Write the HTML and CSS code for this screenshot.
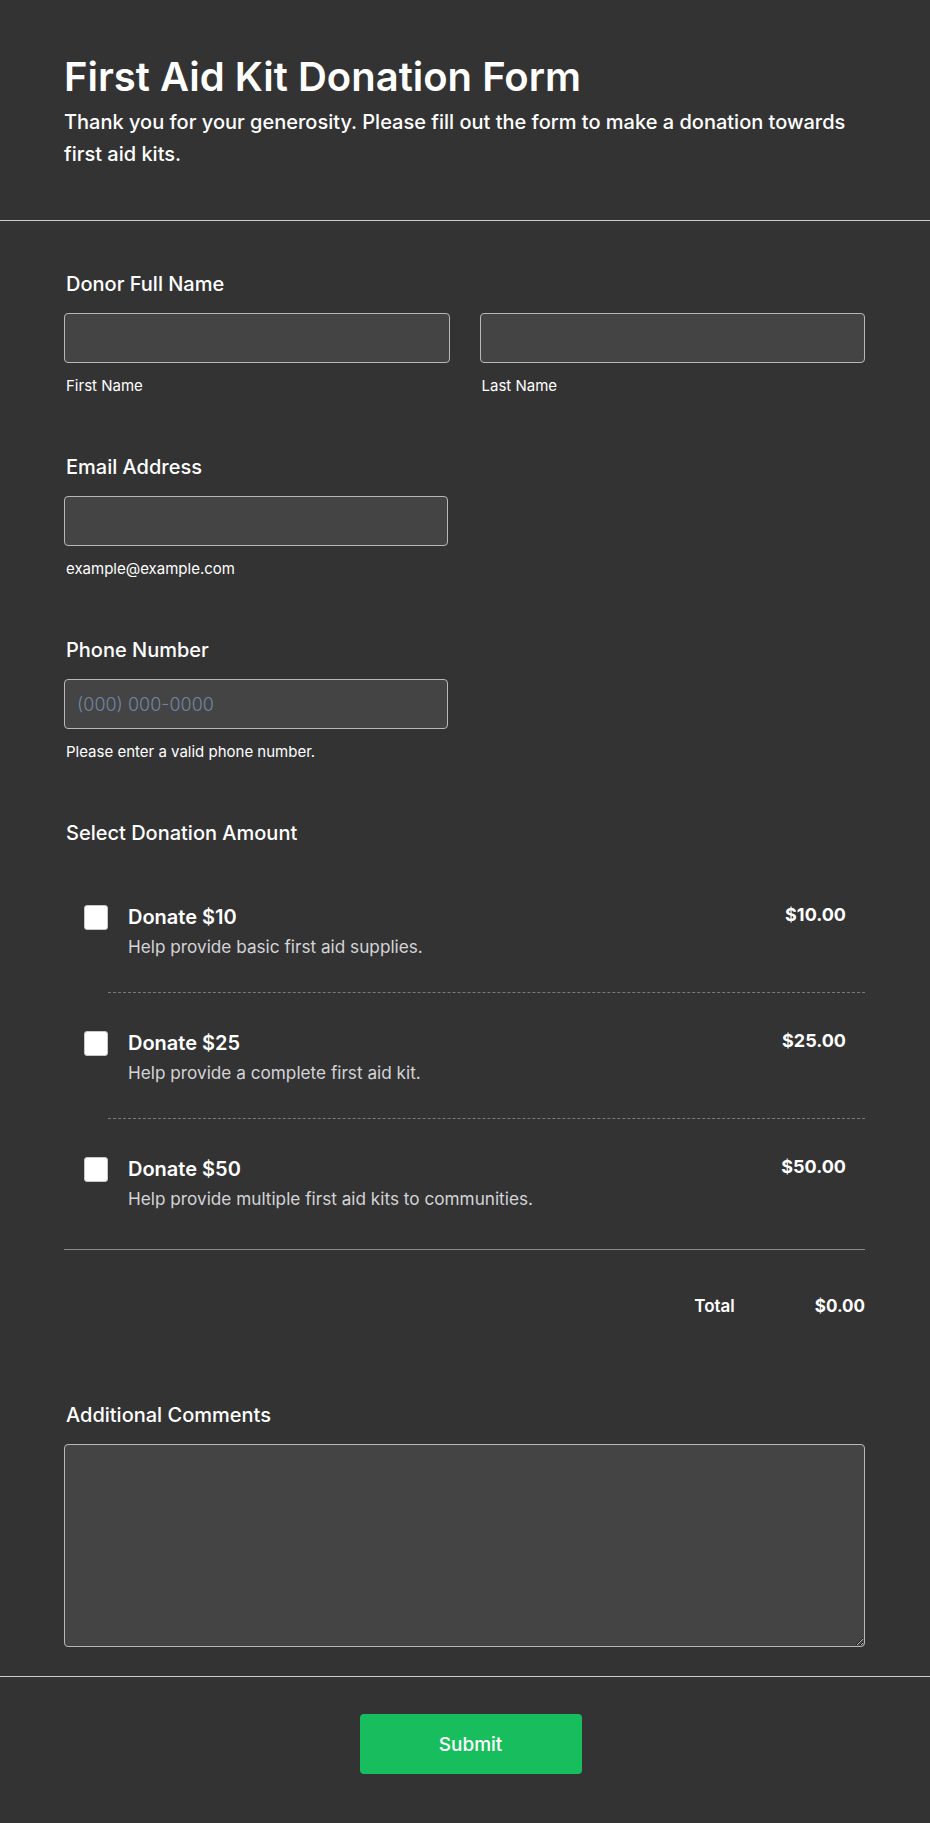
FILE: index.html
```html
<!DOCTYPE html>
<html lang="en">
<head>
    <meta charset="UTF-8">
    <meta name="viewport" content="width=device-width, initial-scale=1.0">
    <title>First Aid Kit Donation Form</title>
    <link rel="stylesheet" href="styles.css">
</head>
<body>
    <header class="form-header">
        <h1>First Aid Kit Donation Form</h1>
        <p>Thank you for your generosity. Please fill out the form to make a donation towards first aid kits.</p>
    </header>

    <form id="donation-form" onsubmit="return false">
        <div class="form-body">

            <!-- name -->
            <div class="field">
                <label class="field-label">Donor Full Name</label>
                <div class="name-row">
                    <div>
                        <input type="text" id="first-name">
                        <span class="hint">First Name</span>
                    </div>
                    <div>
                        <input type="text" id="last-name">
                        <span class="hint">Last Name</span>
                    </div>
                </div>
            </div>

            <div class="field">
                <label class="field-label" for="email">Email Address</label>
                <input type="email" id="email" class="half">
                <span class="hint">example@example.com</span>
            </div>

            <div class="field">
                <label class="field-label" for="phone">Phone Number</label>
                <input type="tel" id="phone" class="half" placeholder="(000) 000-0000">
                <span class="hint">Please enter a valid phone number.</span>
            </div>

            <!-- donation amounts -->
            <div class="field amounts">
                <label class="field-label">Select Donation Amount</label>
                <ul class="amount-list">
                    <li class="amount-item">
                        <input type="checkbox" value="10">
                        <div class="amount-text">
                            <span class="amount-title">Donate $10</span>
                            <span class="amount-desc">Help provide basic first aid supplies.</span>
                        </div>
                        <span class="amount-price">$10.00</span>
                    </li>
                    <li class="amount-sep"></li>
                    <li class="amount-item">
                        <input type="checkbox" value="25">
                        <div class="amount-text">
                            <span class="amount-title">Donate $25</span>
                            <span class="amount-desc">Help provide a complete first aid kit.</span>
                        </div>
                        <span class="amount-price">$25.00</span>
                    </li>
                    <li class="amount-sep"></li>
                    <li class="amount-item last">
                        <input type="checkbox" value="50">
                        <div class="amount-text">
                            <span class="amount-title">Donate $50</span>
                            <span class="amount-desc">Help provide multiple first aid kits to communities.</span>
                        </div>
                        <span class="amount-price">$50.00</span>
                    </li>
                </ul>
                <div class="total-row">
                    <span class="total-label">Total</span>
                    <span class="total-value" id="total">$0.00</span>
                </div>
            </div>

            <div class="field comments">
                <label class="field-label" for="comments">Additional Comments</label>
                <textarea id="comments"></textarea>
            </div>
        </div>

        <div class="form-footer">
            <button type="submit">Submit</button>
        </div>
    </form>
</body>
</html>
```

FILE: styles.css
```css
/* page */
body {
    font-family: "Inter", "Noto Sans", sans-serif;
    background-color: #333333;
    color: #ffffff;
    margin: 0;
    padding: 0;
}

.form-header {
    padding: 53px 64px 50px;
    border-bottom: 1px solid #cccccc;
}

.form-header h1 {
    margin: 0;
    font-size: 40px;
    line-height: 48px;
    font-weight: 600;
}

.form-header p {
    margin: 5px 0 0;
    font-size: 20px;
    line-height: 32px;
    font-weight: 500;
    max-width: 790px;
}

.form-body {
    padding: 49px 65px 29px 64px;
}

.field {
    margin-bottom: 57px;
}

.field-label {
    display: block;
    padding-left: 2px;
    font-size: 20px;
    line-height: 28px;
    font-weight: 500;
    margin-bottom: 15px;
}

input[type="text"],
input[type="email"],
input[type="tel"],
textarea {
    box-sizing: border-box;
    display: block;
    width: 100%;
    height: 50px;
    padding: 0 12px;
    background-color: #444444;
    border: 1px solid #b8b8bc;
    border-radius: 4px;
    color: #ffffff;
    font-family: inherit;
    font-size: 18px;
}

input.half {
    width: 384px;
}

input::placeholder {
    color: #7485a3;
    font-weight: 300;
}

.hint {
    display: block;
    margin-top: 13px;
    padding-left: 2px;
    font-size: 15px;
    line-height: 20px;
}

.name-row {
    display: grid;
    grid-template-columns: 1fr 1fr;
    gap: 30px;
}

/* donation list */
.amount-list {
    list-style-type: none;
    margin: 20px 0 0;
    padding: 0;
    border-bottom: 1px solid #8a8a8a;
}

.amount-item {
    display: flex;
    align-items: flex-start;
    padding: 36px 19px 33px 20px;
}

.amount-item.last {
    padding-bottom: 38px;
}

.amount-sep {
    margin-left: 44px;
    border-top: 1px dashed #7a7a7a;
}

.amount-item input[type="checkbox"] {
    appearance: none;
    -webkit-appearance: none;
    box-sizing: border-box;
    width: 24px;
    height: 25px;
    margin: 2px 20px 0 0;
    background-color: #ffffff;
    border: 1px solid #c8c8c8;
    border-radius: 3px;
    flex-shrink: 0;
}

.amount-text {
    flex: 1;
}

.amount-title {
    display: block;
    font-size: 20px;
    line-height: 28px;
    font-weight: 600;
}

.amount-desc {
    display: block;
    margin-top: 4px;
    font-size: 17.2px;
    line-height: 24px;
    color: #d4d4d8;
}

.amount-price {
    font-size: 18px;
    line-height: 24px;
    font-weight: 700;
}

.total-row {
    display: flex;
    justify-content: flex-end;
    gap: 80px;
    margin-top: 44px;
    font-size: 17px;
    line-height: 24px;
}

.total-label {
    font-weight: 600;
}

.total-value {
    font-weight: 700;
}

.comments {
    margin-top: 83px;
    margin-bottom: 0;
}

textarea {
    height: 203px;
    padding: 10px 12px;
    resize: vertical;
}

/* footer */
.form-footer {
    border-top: 1px solid #cccccc;
    padding: 37px 0 50px 11px;
    text-align: center;
}

button {
    width: 222px;
    height: 60px;
    background-color: #18be5e;
    color: #ffffff;
    border: none;
    border-radius: 4px;
    font-family: inherit;
    font-size: 19px;
    font-weight: 500;
    cursor: pointer;
}

button:hover {
    background-color: #15a953;
}
```
